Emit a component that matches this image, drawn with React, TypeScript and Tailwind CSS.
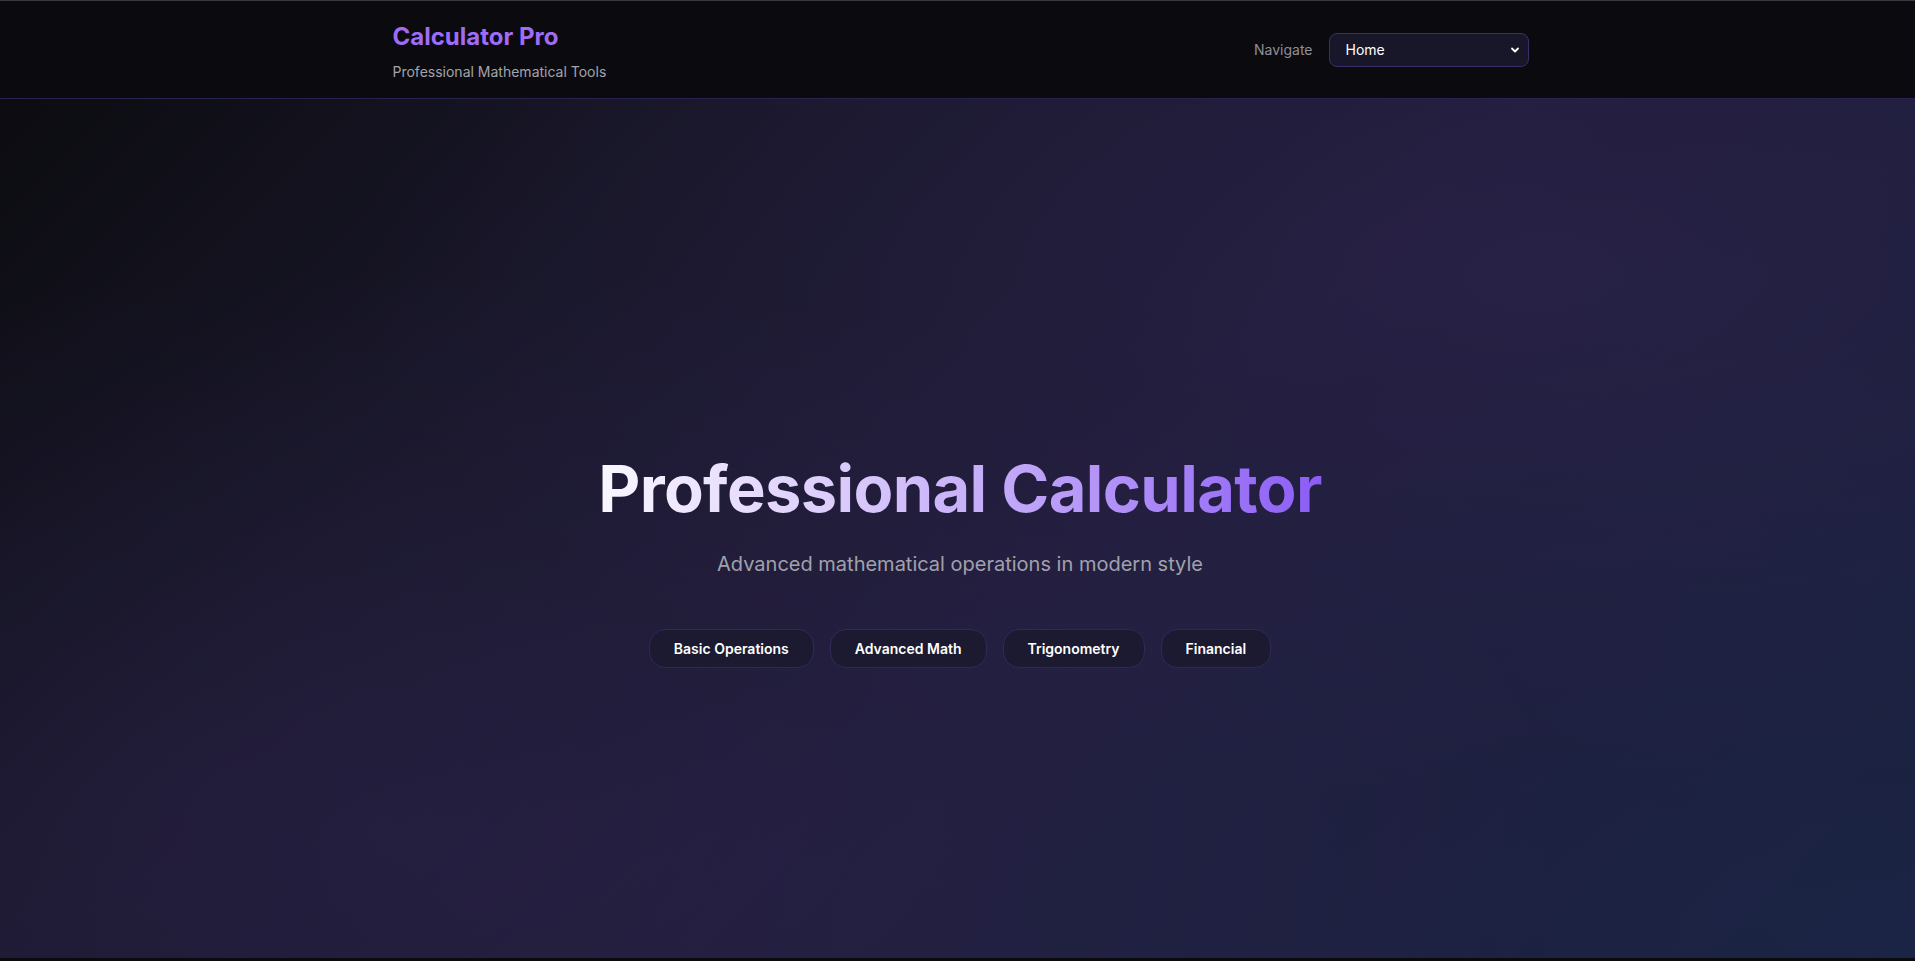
import { useState } from "react";

const categories = ["Basic Operations", "Advanced Math", "Trigonometry", "Financial"];

export default function App() {
  const [page, setPage] = useState("home");

  return (
    <div className="min-h-screen bg-[#0b0b0f] font-['Inter','Noto_Sans',sans-serif] text-white">
      <header className="h-[99px] border-t border-t-[#3a3a40] border-b border-b-[#2a2150] bg-[#0b0b0f]">
        <div className="mx-auto flex h-full max-w-6xl items-center justify-between pl-[11px] pr-[5px]">
          <div className="pt-[4px]">
            <h1 className="text-2xl font-bold text-[#a06cf7]">Calculator Pro</h1>
            <p className="mt-[9px] text-sm text-[#a3a3ad]">Professional Mathematical Tools</p>
          </div>
          <div className="flex items-center gap-4">
            <span className="text-sm text-[#8f8f99]">Navigate</span>
            <div className="relative">
              <select
                value={page}
                onChange={(e) => setPage(e.target.value)}
                className="h-[34px] w-[200px] appearance-none rounded-lg border border-[#3a2d6b] bg-[#18172a] pl-4 pr-8 text-sm text-white outline-none"
              >
                <option value="home">Home</option>
                <option value="basic">Basic Operations</option>
                <option value="advanced">Advanced Math</option>
                <option value="trig">Trigonometry</option>
                <option value="financial">Financial</option>
              </select>
              <svg
                className="pointer-events-none absolute right-2 top-1/2 h-3 w-3 -translate-y-1/2 text-white"
                viewBox="0 0 12 12"
                fill="none"
                stroke="currentColor"
                strokeWidth="1.8"
                strokeLinecap="round"
                strokeLinejoin="round"
              >
                <path d="M3 4.5 6 7.5 9 4.5" />
              </svg>
            </div>
          </div>
        </div>
      </header>

      <section className="relative h-[859px] overflow-hidden bg-[linear-gradient(135deg,#0c0c11_0%,#19172a_28%,#1f1b36_55%,#1c1d38_80%,#182039_100%)]">
        <div className="absolute inset-0 bg-[radial-gradient(ellipse_at_80%_20%,rgba(110,80,200,0.10),transparent_55%)]" />
        <div className="absolute inset-0 bg-[radial-gradient(ellipse_at_20%_85%,rgba(110,80,200,0.10),transparent_55%)]" />
        <div className="absolute inset-0 bg-[radial-gradient(ellipse_at_95%_95%,rgba(40,60,130,0.16),transparent_50%)]" />

        <div className="relative flex h-full flex-col items-center justify-center pl-[5px] pt-16">
          <h2 className="bg-[linear-gradient(90deg,#faf7ff_0%,#d9c9fb_35%,#b393f7_70%,#8b5cf6_100%)] bg-clip-text text-[65px] font-bold leading-[1.1] tracking-[-0.01em] text-transparent">
            Professional Calculator
          </h2>
          <p className="mt-[26px] text-xl text-[#a1a1ad]">Advanced mathematical operations in modern style</p>
          <div className="mt-[51px] flex gap-4">
            {categories.map((c) => (
              <button
                key={c}
                className="h-[39px] rounded-2xl border border-[#31285a] bg-[#1b1a30] px-6 text-sm font-semibold text-white"
              >
                {c}
              </button>
            ))}
          </div>
        </div>
      </section>

      <div className="h-40 bg-[#0b0b0f]" />
    </div>
  );
}
